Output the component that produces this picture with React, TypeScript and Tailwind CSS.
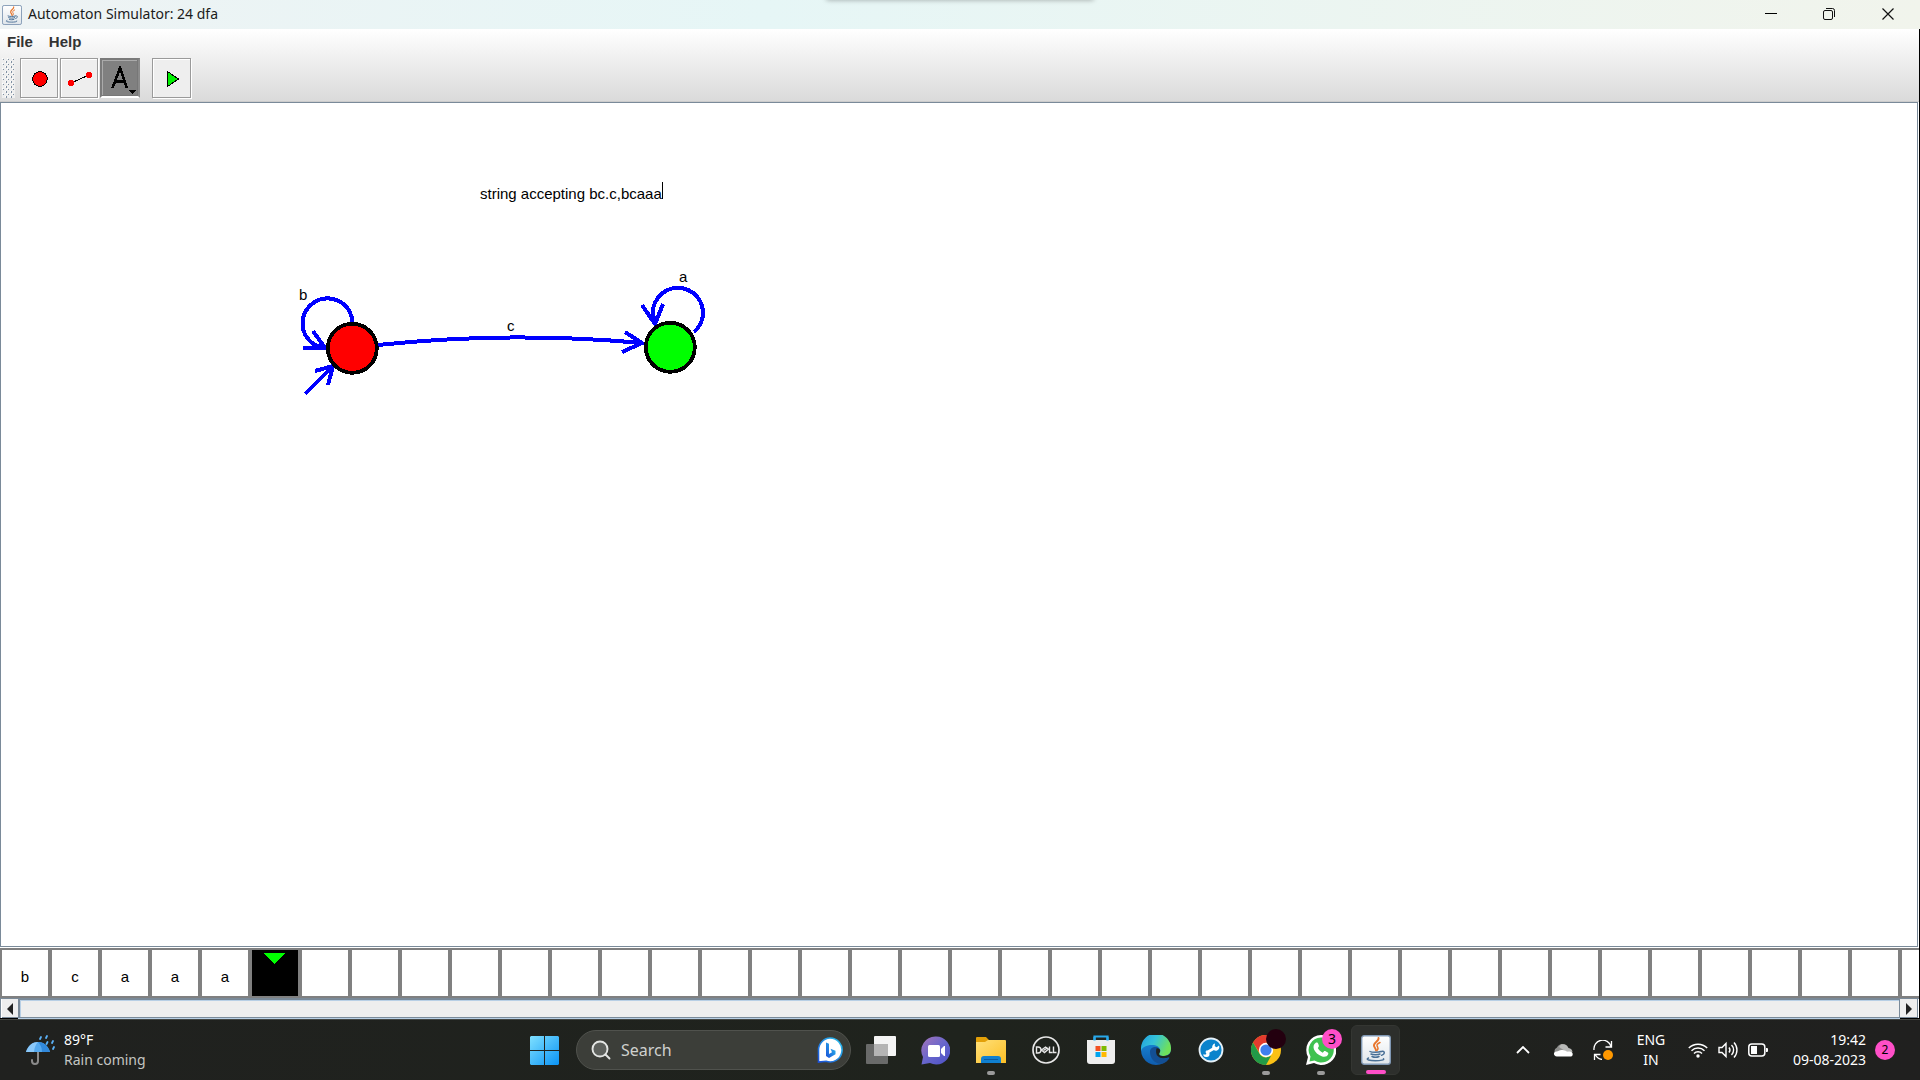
import React from "react";

const TAPE: string[] = ["b", "c", "a", "a", "a", ...Array(34).fill("")];
const HEAD = 5;

function JavaCup({ className }: { className: string }) {
  return (
    <svg viewBox="0 0 30 30" className={className} aria-hidden="true">
      <defs>
        <linearGradient id="cupBg" x1="0" y1="0" x2="0" y2="1">
          <stop offset="0" stopColor="#ffffff" />
          <stop offset="1" stopColor="#dfe5ea" />
        </linearGradient>
      </defs>
      <rect x="0.7" y="0.7" width="28.600" height="28.600" rx="2.500" fill="url(#cupBg)" stroke="#8098b4" strokeWidth="1.400" />
      <g fill="none" strokeLinecap="round">
        <path d="M17.500 3c1 3-5.500 4.500-4.500 8 .4 1.500 2 2.500 2 4.500" stroke="#e8762d" strokeWidth="1.900" />
        <path d="M19 7.500c-3.500 1.500-3.500 3-2.300 4.700.8 1.200.3 2.300-.7 3.300" stroke="#e8762d" strokeWidth="1.500" />
        <path d="M9 16.500c1.500 1 9 1 11 0M10 19c2 1 7 1 9 0M11 21.500c2 .9 5 .9 7 0" stroke="#4a7096" strokeWidth="1.500" />
        <path d="M20.500 16.500c3.500-1 4 2.500 0 3.800" stroke="#4a7096" strokeWidth="1.400" />
        <path d="M7.500 23c-4 1.800 2 2.700 7 2.700s9.500-.8 8-2" stroke="#4a7096" strokeWidth="1.400" />
      </g>
    </svg>
  );
}

function TitleBar() {
  return (
    <header className="relative flex h-[29px] shrink-0 items-center overflow-hidden bg-linear-to-r from-[#eef3f4] via-[#e6f6f6] via-40% to-[#f1f4ec] pl-0.5 pr-[3px]">
      <span className="absolute -top-1 left-[43%] h-1 w-[14%] rounded-full shadow-[0_0_5px_rgba(0,0,0,0.35)]" />
      <JavaCup className="h-5 w-5" />
      <h1 className="ml-1.5 flex-1 pb-px font-['Noto_Sans','Open_Sans',sans-serif] text-sm text-[#1b1b1b]">
        Automaton Simulator: 24 dfa
      </h1>
      <button aria-label="Minimize" className="flex h-full w-[59px] items-center justify-center pb-px">
        <svg viewBox="0 0 14 14" className="h-3.5 w-3.5" stroke="#000" fill="none"><path d="M1 6.500h12" /></svg>
      </button>
      <button aria-label="Restore" className="flex h-full w-[58px] items-center justify-center pb-px">
        <svg viewBox="0 0 14 14" className="h-3.5 w-3.5" stroke="#111" fill="none">
          <rect x="1.500" y="3.500" width="9" height="9" rx="1.500" />
          <path d="M4 1.500h6.500a2 2 0 0 1 2 2V10" />
        </svg>
      </button>
      <button aria-label="Close" className="flex h-full w-[59px] items-center justify-center pb-px">
        <svg viewBox="0 0 14 14" className="h-3.5 w-3.5" stroke="#111" strokeWidth="1.200" fill="none">
          <path d="M1.500 1.500l11 11M12.500 1.500l-11 11" />
        </svg>
      </button>
    </header>
  );
}

const toolBase = "flex h-10 items-center justify-center border border-[#9a9a9a] bg-[#eeeeee] pt-px pl-0.5 shadow-[inset_1px_1px_0_#fff,1px_1px_0_#fff]";

function ToolArea() {
  return (
    <div className="shrink-0 border-b border-[#cccccc] bg-linear-to-b from-white to-[#dadada]">
      <nav className="flex h-[27px] items-center gap-4 pb-0.5 pl-[7px] font-['Liberation_Sans',Arial,sans-serif] text-[15px] leading-5 font-bold text-[#333333]">
        <button>File</button>
        <button>Help</button>
      </nav>
      <div className="flex h-[45px] items-start pt-0.5">
        <svg className="ml-0.5 h-10 w-[13px]" aria-hidden="true" shapeRendering="crispEdges">
          <defs>
            <pattern id="grip" width="5" height="5" patternUnits="userSpaceOnUse">
              <rect width="5" height="5" fill="#efefef" />
              <path d="M0 0h1v1H0zM3 3h1v1H3z" fill="#fff" />
              <path d="M1 1h1v1H1zM4 3h1v2H4z" fill="#7f90a2" />
            </pattern>
          </defs>
          <rect width="13" height="40" fill="url(#grip)" />
        </svg>
        <button aria-label="State tool" className={`${toolBase} ml-[5px] w-[38px]`}>
          <svg viewBox="0 0 16 16" className="h-4 w-4" shapeRendering="crispEdges">
            <circle cx="8" cy="8" r="7.300" fill="#f00" stroke="#000" />
          </svg>
        </button>
        <button aria-label="Transition tool" className={`${toolBase} ml-0.5 w-[38px]`}>
          <svg viewBox="0 0 24 14" className="h-3.5 w-6" shapeRendering="crispEdges">
            <path d="M3 11L21 3" stroke="#000" />
            <circle cx="3" cy="11" r="3" fill="#f00" />
            <circle cx="21" cy="3" r="3" fill="#f00" />
          </svg>
        </button>
        <button aria-label="Text tool" aria-pressed="true" className="ml-0.5 flex h-10 w-10 items-center justify-center border-2 border-t-[#7a7a7a] border-r-[#8a8a8a] border-b-white border-l-[#7a7a7a] bg-[#808080] pl-1 shadow-[inset_-1px_-1px_0_#777,inset_1px_1px_0_#aaa]">
          <svg viewBox="0 0 28 32" className="h-8 w-7" shapeRendering="crispEdges">
            <path d="M4.500 26L12 6L19 26M7 19.500H17" fill="none" stroke="#000" strokeWidth="2.600" />
            <path d="M20 28h8l-4 4z" fill="#000" />
          </svg>
        </button>
        <button aria-label="Run" className={`${toolBase} ml-3 w-[39px]`}>
          <svg viewBox="0 0 14 18" className="h-[18px] w-3.5" shapeRendering="crispEdges">
            <path d="M1.500 1.500V16.500L12.500 9z" fill="#00f000" stroke="#000" />
          </svg>
        </button>
      </div>
    </div>
  );
}

function Diagram() {
  return (
    <main className="relative mr-px mb-px min-h-0 flex-1 overflow-hidden border border-[#7a8a99] bg-white font-['Liberation_Sans',Arial,sans-serif] text-[15px]">
      <p className="absolute top-[79px] left-[479px] flex items-start leading-5 whitespace-pre text-black">
        <span className="pt-0.5">string accepting bc.c,bcaaa</span>
        <span className="h-[17px] w-px bg-black" />
      </p>
      <svg
        viewBox="290 260 430 150"
        className="absolute top-[157px] left-[289px] h-[150px] w-[430px]"
        shapeRendering="crispEdges"
        role="img"
        aria-label="Automaton"
      >
        <g fill="none" stroke="#0000ff" strokeWidth="4">
          <path d="M352.500 323A25 25 0 1 0 315 345L324 348" />
          <path d="M303 348H325L313 331" />
          <path d="M305 394L333 366M315 371L333 366L328 385" />
          <path d="M378 345Q511 331 642 343" />
          <path d="M625 332L642 343L622 352" />
          <path d="M694 332A25 25 0 1 0 653 314L655 324" />
          <path d="M642 305L655 324L663 304" />
        </g>
        <circle cx="352.300" cy="348.300" r="24.500" fill="#ff0000" stroke="#000" strokeWidth="3.800" />
        <circle cx="670.300" cy="347.300" r="24.500" fill="#00ff00" stroke="#000" strokeWidth="3.800" />
        <g fontSize="15" fill="#000">
          <text x="299" y="300">b</text>
          <text x="507" y="331">c</text>
          <text x="679" y="282">a</text>
        </g>
      </svg>
    </main>
  );
}

function Tape() {
  return (
    <section aria-label="Tape" className="flex shrink-0 overflow-hidden bg-white font-['Liberation_Sans',Arial,sans-serif] text-[15px] leading-5">
      {TAPE.map((ch, i) => (
        <div
          key={i}
          className={
            i === HEAD
              ? "flex h-[50px] w-[50px] shrink-0 justify-center border-2 border-[#808080] bg-black pt-[3px] pr-0.5"
              : "flex h-[50px] w-[50px] shrink-0 items-center justify-center border-2 border-[#808080] bg-white pt-2"
          }
        >
          {i === HEAD ? (
            <svg viewBox="0 0 22 11" className="h-[11px] w-[22px]" shapeRendering="crispEdges"><path d="M0 0h22L11 11z" fill="#0f0" /></svg>
          ) : (
            ch
          )}
        </div>
      ))}
      <div className="h-[50px] flex-1 border-y-2 border-l-2 border-[#808080]" />
    </section>
  );
}

function TapeScroll() {
  return (
    <div className="flex h-5 shrink-0 border-t border-l border-[#7a8a99] bg-white">
      <button aria-label="Scroll left" className="ml-px flex w-4 items-center justify-center border-b border-[#7a8a99] bg-[#eeeeee] pt-px">
        <svg viewBox="0 0 6 12" className="h-3 w-1.5" fill="#222"><path d="M6 0v12L0 6z" /></svg>
      </button>
      <div className="flex-1 border border-l-2 border-[#7a8a99] bg-[#eeeeee] shadow-[inset_1px_1px_0_#b8cfe5,0_1px_0_#b8cfe5]" />
      <button aria-label="Scroll right" className="mr-px flex w-[18px] items-center justify-center border-r border-b border-[#7a8a99] bg-[#eeeeee] pt-px">
        <svg viewBox="0 0 6 12" className="h-3 w-1.5" fill="#222"><path d="M0 0v12L6 6z" /></svg>
      </button>
    </div>
  );
}

function WeatherIcon() {
  return (
    <svg viewBox="0 0 30 32" className="h-8 w-[30px]" fill="none" strokeLinecap="round">
      <path d="M13 14v13a3 3 0 0 1-6 0v-1" stroke="#8a8a8a" strokeWidth="2" />
      <path d="M1 18C3 11 8 8 13 8s10 3 12 10z" fill="#55a9ef" />
      <path d="M9 18c.5-5 2-8 4-10-6 0-10 4-12 10z" fill="#8ac8fa" />
      <path d="M17 18c0-5-2-8-4-10 6 0 10 4 12 10z" fill="#3189dc" />
      <path d="M16 3l-1 2M22 2l-1 2M22.500 8l-1 2M28 7l-1 2M29 13l-1 2" stroke="#5ab0f5" strokeWidth="1.800" />
    </svg>
  );
}

function TaskItem({ label, running, children }: { label: string; running?: boolean; children: React.ReactNode }) {
  return (
    <button aria-label={label} className="relative flex h-[50px] w-[55px] items-center justify-center">
      {children}
      {running && <span className="absolute bottom-0 left-6 h-1 w-2 rounded-full bg-[#9b9b9b]" />}
    </button>
  );
}

function Taskbar() {
  return (
    <footer className="grid h-[61px] shrink-0 grid-cols-[1fr_auto_1fr] items-center border-t border-[#454743] bg-linear-to-r from-[#20211f] via-[#1f231d] to-[#20201f] font-['Noto_Sans','Open_Sans',sans-serif] text-sm leading-5 text-white">
      <button className="flex items-center gap-[9px] pl-[25px] text-left">
        <WeatherIcon />
        <span className="flex flex-col">
          <span>89°F</span>
          <span className="text-[#c4c6c3]">Rain coming</span>
        </span>
      </button>

      <div className="flex items-center">
        <TaskItem label="Start">
          <svg viewBox="0 0 29 29" className="h-[29px] w-[29px]">
            <defs>
              <linearGradient id="win" x1="0" y1="0" x2="1" y2="1">
                <stop offset="0" stopColor="#7fe0ff" /><stop offset="1" stopColor="#0a93f5" />
              </linearGradient>
            </defs>
            <path d="M1 0h13v14H0V1zM15 0h13l1 1v13H15zM0 15h14v14H1l-1-1zM15 15h14v13l-1 1H15z" fill="url(#win)" />
          </svg>
        </TaskItem>
        <label className="mr-0.5 ml-1 flex h-10 w-[275px] items-center rounded-full border border-[#50524d] bg-[#3c3e39] pr-[7px] pl-3.5">
          <svg viewBox="0 0 20 20" className="h-5 w-5" fill="none" stroke="#e4e6e4" strokeWidth="1.900" strokeLinecap="round">
            <circle cx="9" cy="9" r="7.500" fill="#5d605c" /><path d="M14.500 14.500l4 4" />
          </svg>
          <input aria-label="Search" placeholder="Search" className="ml-2.5 min-w-0 flex-1 bg-transparent text-base placeholder:text-[#cfd1ce] outline-none" />
          <svg viewBox="0 0 26 26" className="h-[26px] w-[26px]">
            <defs>
              <linearGradient id="bing" x1="1" y1="0" x2="0" y2="1">
                <stop offset="0" stopColor="#29c4ee" /><stop offset="1" stopColor="#1b50d8" />
              </linearGradient>
            </defs>
            <path d="M13 1a12 12 0 1 1-4 23.300L1.500 25V13A12 12 0 0 1 13 1z" fill="#fff" stroke="url(#bing)" strokeWidth="1.600" />
            <path d="M9 5.500l3 1.200V17l3-1.800-1.500-3.500 5 2v3.500L12 21l-3-2z" fill="url(#bing)" />
          </svg>
        </label>
        <TaskItem label="Task View">
          <svg viewBox="0 0 30 28" className="h-7 w-[30px]">
            <rect x="8" y="0" width="22" height="20" rx="1" fill="#f4f4f4" />
            <rect x="0" y="8" width="22" height="20" rx="1" fill="#777" opacity=".85" />
            <path d="M8 8h14v12H8z" fill="#b4b4b4" />
          </svg>
        </TaskItem>
        <TaskItem label="Chat">
          <svg viewBox="0 0 29 29" className="h-[29px] w-[29px]">
            <defs>
              <linearGradient id="chat" x1="0" y1="0" x2="1" y2="1">
                <stop offset="0" stopColor="#a674b8" /><stop offset=".5" stopColor="#6866cc" /><stop offset="1" stopColor="#4b50c5" />
              </linearGradient>
            </defs>
            <path d="M15 .5a14 14 0 1 1-6 26.500L.5 28.500 2 21A14 14 0 0 1 15 .5z" fill="url(#chat)" />
            <rect x="7" y="9" width="12" height="12" rx="1.500" fill="#fff" />
            <path d="M20 13l3-3h1v10h-1l-3-3z" fill="#fff" />
          </svg>
        </TaskItem>
        <TaskItem label="File Explorer" running>
          <svg viewBox="0 0 30 28" className="h-7 w-[30px]">
            <defs>
              <linearGradient id="folder" x1="0" y1="0" x2="1" y2="1">
                <stop offset="0" stopColor="#ffe07a" /><stop offset="1" stopColor="#fcbf25" />
              </linearGradient>
            </defs>
            <path d="M0 2a1 1 0 0 1 1-1h9l3 3h8v6H0z" fill="#e3a008" />
            <path d="M0 6h9l3-2h17a1 1 0 0 1 1 1v22H0z" fill="url(#folder)" />
            <path d="M5 27v-4a3 3 0 0 1 3-3h14a3 3 0 0 1 3 3v4z" fill="#1080d0" />
            <path d="M8 23.500h14" stroke="#0b5aa0" />
          </svg>
        </TaskItem>
        <TaskItem label="Dell">
          <svg viewBox="0 0 28 28" className="h-7 w-7" fill="none" stroke="#e8e8e8">
            <circle cx="14" cy="14" r="13" strokeWidth="1.700" />
            <path d="M4.500 11v6h1.500a3 3 0 0 0 0-6zM9.500 14l4-3 1.500 1-3.500 2.500 3.500-2.500 1.500 1-4 3.500zM17.500 10.500v6h3M21.500 10.500v6H24.500" strokeWidth="1.400" />
          </svg>
        </TaskItem>
        <TaskItem label="Microsoft Store">
          <svg viewBox="0 0 30 30" className="h-[30px] w-[30px]">
            <path d="M8.500 6V1.500h13V6" fill="none" stroke="#28a8ea" strokeWidth="2.200" />
            <path d="M1 5h28v21a3 3 0 0 1-3 3H4a3 3 0 0 1-3-3z" fill="#eeeeee" />
            <path d="M9.500 11h5v5h-5z" fill="#f25022" /><path d="M15.500 11h5v5h-5z" fill="#7fba00" />
            <path d="M9.500 17h5v5h-5z" fill="#00a4ef" /><path d="M15.500 17h5v5h-5z" fill="#ffb900" />
            <path d="M8.500 5.500V2M21.500 5.500V2" stroke="#28a8ea" strokeWidth="2.200" />
          </svg>
        </TaskItem>
        <TaskItem label="Edge">
          <svg viewBox="0 0 30 30" className="h-[30px] w-[30px]">
            <defs>
              <linearGradient id="edgeTop" x1="0" y1="0" x2="1" y2=".4">
                <stop offset="0" stopColor="#1f9de0" /><stop offset=".5" stopColor="#35c3d8" /><stop offset="1" stopColor="#6fe05a" />
              </linearGradient>
              <linearGradient id="edgeLow" x1="0" y1="0" x2="0" y2="1">
                <stop offset="0" stopColor="#1a8fdc" /><stop offset="1" stopColor="#0f5cae" />
              </linearGradient>
            </defs>
            <path d="M15 0A15 15 0 1 0 28 22.500L30 14A15 15 0 0 0 15 0z" fill="url(#edgeLow)" />
            <path d="M0 13A15 15 0 0 1 30 14c0 5-4 7-7.500 7-4 0-5-1.500-4-3 2-3 0-7.500-6-8C6 9.500 1 12 0 16z" fill="url(#edgeTop)" />
            <path d="M9 17c0 7 6 13 13 11.500C28 26 29 22 28 22c-3 2.500-9 2-11.500-1-2-2.500-1.500-6 .5-8.500-5-1.500-8 1-8 4.500z" fill="#134f94" />
            <path d="M15.500 13.500c2.500-1 5 1.500 3 4.500-1 1.500 0 3 4 3 3 0 5.500-1 7.500-3.500V22l-2 .2c-5 2.300-12 1-12.800-4-.2-1.700-.2-3 .3-4.700z" fill="#1f221e" />
          </svg>
        </TaskItem>
        <TaskItem label="Support Assist">
          <svg viewBox="0 0 26 26" className="h-[26px] w-[26px]">
            <circle cx="13" cy="13" r="11.500" fill="#0a83cc" stroke="#e6f1f8" strokeWidth="1.800" />
            <path d="M8 16L17.500 10.500" stroke="#fff" strokeWidth="2.600" />
            <path d="M21 8.500A3.600 3.600 0 1 1 17 6.500l-.3 2.700 2 1zM5 17.500A3.300 3.300 0 1 0 8 13.500l1.300 2.500-1.500 1.500z" fill="#fff" />
          </svg>
        </TaskItem>
        <TaskItem label="Chrome" running>
          <svg viewBox="0 0 30 30" className="h-[30px] w-[30px]">
            <circle cx="15" cy="15" r="15" fill="#fbc116" />
            <path d="M2 7.500A15 15 0 0 1 28 7.500H15L9 18.500z" fill="#e33b2e" />
            <path d="M2 7.500L8.500 18.800A7.500 7.500 0 0 0 15 22.500l5-1.500-5 9A15 15 0 0 1 2 7.500z" fill="#229a48" />
            <circle cx="15" cy="15" r="7.200" fill="#fff" /><circle cx="15" cy="15" r="5.600" fill="#3f7fee" />
          </svg>
          <span className="absolute top-1 right-[7px] h-5 w-5 rounded-full bg-[#23000f]" />
        </TaskItem>
        <TaskItem label="WhatsApp" running>
          <svg viewBox="0 0 30 30" className="h-[30px] w-[30px]">
            <path d="M15 0a15 15 0 1 1-7 28L0 30l2-8A15 15 0 0 1 15 0z" fill="#fff" />
            <path d="M15 2.500a12.500 12.500 0 1 1-6.500 23L3.500 26.500l1-5A12.500 12.500 0 0 1 15 2.500z" fill="#3fc250" />
            <path d="M9.500 8c1.500-1 2.300-.5 3 1.500.8 2 .2 2.200-.7 3.500 1.200 2.200 2.700 3.700 5 4.700 1.300-1.500 1.500-2 3.200-1.200 2.300 1 2.600 1.200 2.200 2.700-.7 2.300-3.700 3-6 2.200-4.700-1.700-6.700-4-8.200-7C7 12 7.500 9.500 9.500 8z" fill="#fff" />
          </svg>
          <span className="absolute top-1 right-[6px] flex h-5 w-5 items-center justify-center rounded-full bg-[#ff4fc8] text-black">3</span>
        </TaskItem>
        <button aria-label="Automaton Simulator" className="relative mx-[3px] flex h-[50px] w-[49px] items-center justify-center rounded-md border border-[#343632] bg-[#2d2f2c]">
          <JavaCup className="h-[30px] w-[30px]" />
          <span className="absolute bottom-0 left-3.5 h-1 w-5 rounded-full bg-[#ff4fc8]" />
        </button>
      </div>

      <div className="flex items-center justify-end pr-[25px]">
        <button aria-label="Show hidden icons" className="flex w-10 justify-center">
          <svg viewBox="0 0 14 8" className="h-2 w-3.5" fill="none" stroke="#fff" strokeWidth="1.800"><path d="M1 7l6-6 6 6" /></svg>
        </button>
        <button aria-label="OneDrive" className="flex w-10 justify-center">
          <svg viewBox="0 0 20 14" className="h-3.5 w-5">
            <path d="M4 12a4 4 0 0 1 0-7.500A6 6 0 0 1 14 3l-2 7z" fill="#8f908e" />
            <path d="M8 1.500A6 6 0 0 1 15.500 5a4.500 4.500 0 0 1 4 4L12 8 6 4z" fill="#b9bab8" />
            <path d="M4 13.500c-4 0-4-5-.5-5 2 0 3-2 6-1.500 2.500.4 4 1.500 6.500 1.300 4.500-.3 5 5.200 1 5.200z" fill="#fff" />
          </svg>
        </button>
        <button aria-label="Update" className="flex w-10 justify-center">
          <svg viewBox="0 0 20 20" className="h-5 w-5" fill="none" stroke="#fff" strokeWidth="1.300">
            <path d="M1 10A8.700 8.700 0 0 1 18 6.500M18.500 1v6h-6M9 19.500A9 9 0 0 1 2 14M1.500 20v-5.500h6" />
            <circle cx="15" cy="15" r="5" fill="#ff9800" stroke="none" />
          </svg>
        </button>
        <button className="w-14 text-center">
          ENG
          <br />
          IN
        </button>
        <button aria-label="Network, volume and battery" className="flex items-center gap-2.5 pl-[9px]">
          <svg viewBox="0 0 20 16" className="h-4 w-5" fill="none" stroke="#fff" strokeWidth="1.500">
            <path d="M.8 6a13 13 0 0 1 18.400 0M3.500 8.800a9.200 9.200 0 0 1 13 0M6 11.500a5.600 5.600 0 0 1 8 0" />
            <circle cx="10" cy="14" r="1.700" fill="#fff" stroke="none" />
          </svg>
          <svg viewBox="0 0 20 18" className="h-[18px] w-5" fill="none" stroke="#fff" strokeWidth="1.400">
            <path d="M1 6.500h3l4-4v13l-4-4H1zM11 6.500a4 4 0 0 1 0 5M13.500 4a7 7 0 0 1 0 10M16 1.500a11 11 0 0 1 0 15" />
          </svg>
          <svg viewBox="0 0 20 14" className="h-3.5 w-5">
            <rect x=".8" y="1" width="16" height="12" rx="3" fill="none" stroke="#fff" strokeWidth="1.500" />
            <path d="M3 3h6v8H3zM18 5h1a1 1 0 0 1 1 1v2a1 1 0 0 1-1 1h-1z" fill="#fff" />
          </svg>
        </button>
        <button className="ml-3.5 w-[84px] text-right whitespace-nowrap">
          19:42
          <br />
          09-08-2023
        </button>
        <button aria-label="2 notifications" className="ml-[9px] flex h-5 w-5 items-center justify-center rounded-full bg-[#ff4fc8] text-xs text-black">
          2
        </button>
      </div>
    </footer>
  );
}

export default function App() {
  return (
    <div className="flex h-screen flex-col overflow-hidden bg-black">
      <TitleBar />
      <div className="flex min-h-0 flex-1 flex-col border-r border-b border-black bg-white">
        <ToolArea />
        <Diagram />
        <Tape />
        <TapeScroll />
      </div>
      <Taskbar />
    </div>
  );
}
